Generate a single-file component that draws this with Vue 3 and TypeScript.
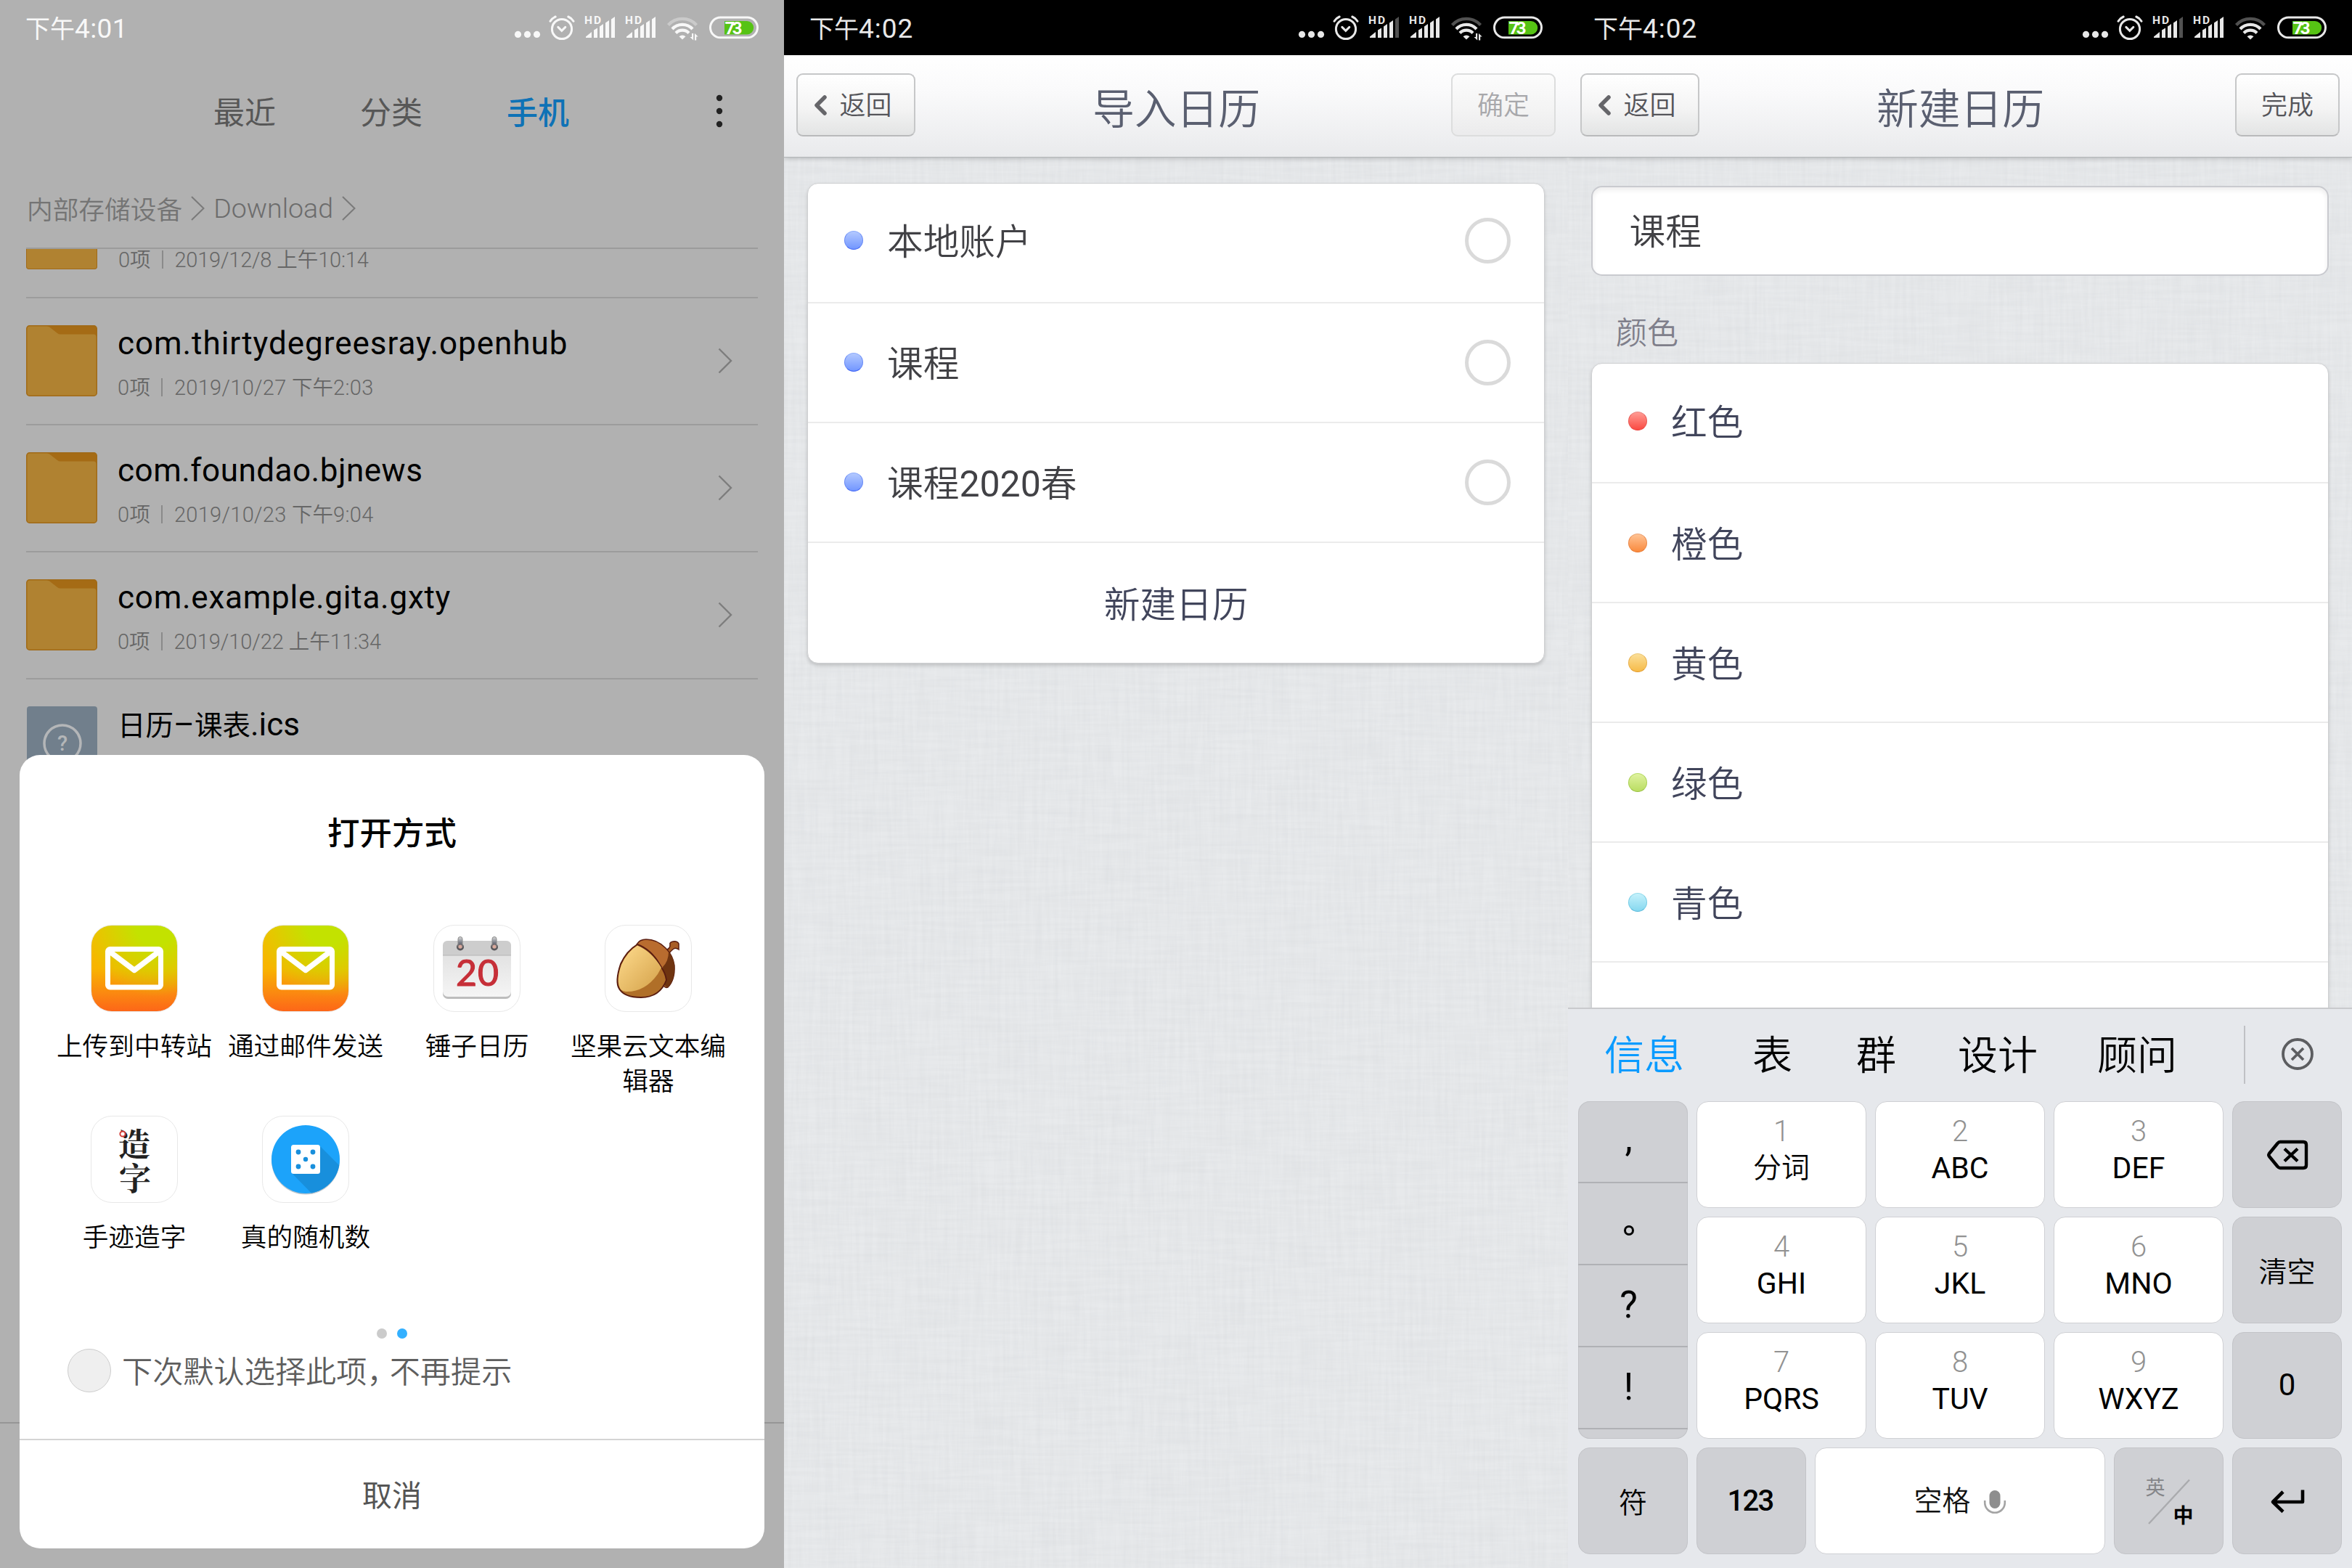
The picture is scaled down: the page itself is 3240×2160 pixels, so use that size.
<script setup lang="ts">
interface Screen {
  id: 'files' | 'import' | 'create'
  time: string
  weakSignal: boolean
  traffic: boolean
}

const screens: Screen[] = [
  { id: 'files', time: '4:01', weakSignal: false, traffic: true },
  { id: 'import', time: '4:02', weakSignal: true, traffic: true },
  { id: 'create', time: '4:02', weakSignal: true, traffic: false },
]

const tabs = ['最近', '分类', '手机']

const folders = [
  { name: 'com.thirtydegreesray.openhub', date: '2019/10/27', half: '下午', time: '2:03', track: 0.95, metaTrack: 0.3 },
  { name: 'com.foundao.bjnews', date: '2019/10/23', half: '下午', time: '9:04', track: 0.5, metaTrack: 0.3 },
  { name: 'com.example.gita.gxty', date: '2019/10/22', half: '上午', time: '11:34', track: 0.75, metaTrack: -0.05 },
]

const apps = [
  { icon: 'mail', label: '上传到中转站' },
  { icon: 'mail', label: '通过邮件发送' },
  { icon: 'calendar', label: '锤子日历' },
  { icon: 'nut', label: '坚果云文本编辑器' },
  { icon: 'zaozi', label: '手迹造字' },
  { icon: 'dice', label: '真的随机数' },
]

const calendars = [['本地账户'], ['课程'], ['课程', '2020', '春']]

const colors = [
  { name: '红色', cls: 'red' },
  { name: '橙色', cls: 'orange' },
  { name: '黄色', cls: 'yellow' },
  { name: '绿色', cls: 'green' },
  { name: '青色', cls: 'cyan' },
]

const keys = [
  ['1', '分词'], ['2', 'ABC'], ['3', 'DEF'],
  ['4', 'GHI'], ['5', 'JKL'], ['6', 'MNO'],
  ['7', 'PQRS'], ['8', 'TUV'], ['9', 'WXYZ'],
]
</script>

<template>
  <main class="board">
    <section v-for="s in screens" :key="s.id" class="screen" :class="s.id">
      <svg v-if="s.id !== 'files'" class="linen" width="1080" height="2160">
        <filter :id="s.id + 'Warp'" x="0" y="0" width="100%" height="100%" color-interpolation-filters="sRGB">
          <feTurbulence type="fractalNoise" baseFrequency="0.18 0.012" numOctaves="2" seed="3" />
          <feColorMatrix values="0 0 0 0 .45  0 0 0 0 .47  0 0 0 0 .5  .07 0 0 0 -.02" />
        </filter>
        <filter :id="s.id + 'Weft'" x="0" y="0" width="100%" height="100%" color-interpolation-filters="sRGB">
          <feTurbulence type="fractalNoise" baseFrequency="0.012 0.18" numOctaves="2" seed="8" />
          <feColorMatrix values="0 0 0 0 .45  0 0 0 0 .47  0 0 0 0 .5  .07 0 0 0 -.02" />
        </filter>
        <rect width="1080" height="2160" :filter="`url(#${s.id}Warp)`" />
        <rect width="1080" height="2160" :filter="`url(#${s.id}Weft)`" />
      </svg>

      <header class="status">
        <span class="clock"><span class="cjk">下午</span>{{ s.time }}</span>
        <svg class="status-icons" width="350" height="76" viewBox="700 0 350 76" fill="none" stroke-linecap="round">
          <g class="ink">
            <circle cx="713.5" cy="47.4" r="4.6" />
            <circle cx="726.5" cy="47.4" r="4.6" />
            <circle cx="739.5" cy="47.4" r="4.6" />
          </g>
          <g class="line" stroke-width="3">
            <circle cx="774" cy="40" r="13.6" />
            <path d="M768.8 37.4l5 4.9 5-4.9" />
            <path d="M758 29.2q2.5-4.2 7.2-6.2M790 29.2q-2.500-4.200-7.200-6.200" />
          </g>
          <g v-for="n in 2" :key="n" :transform="`translate(${(n - 1) * 56} 0)`" class="ink">
            <text x="805" y="32.800" font-size="15.500" font-weight="700" textLength="23">HD</text>
            <path d="M807 52v-1.500l8-6.500v8zM818 52V41.500l5-3V52zM826 52V36.500l5-3.500V52zM834 52V31.500l5-3.500V52z" />
            <path d="M842 52V26.500l5-3.500V52z" :opacity="n === 1 && s.weakSignal ? 0.35 : 1" />
          </g>
          <g class="line" stroke-width="4.200" stroke-linecap="butt">
            <path d="M920.500 34.500a26.500 26.500 0 0 1 39 0" opacity="0.35" />
            <path d="M926 40a19 19 0 0 1 28 0" />
            <path d="M931 45.500a12.500 12.500 0 0 1 18 0" />
          </g>
          <path class="ink" d="M935.500 50.200q4.500-3.600 9 0l-4.500 4.300z" />
          <path v-if="s.traffic" class="ink" d="M953 46h2.200v9.500l-4.700-4.500h2.500zM957 55.500v-9.500l4.700 4.500h-2.500v5z" />
          <rect class="line" x="978.500" y="24" width="65" height="27.800" rx="13.900" stroke-width="3" />
          <path fill="#56c314" d="M998 29h31a9.200 9.200 0 0 1 0 18.400h-31z" />
          <text class="pct" x="998.500" y="46.800" font-size="24" font-weight="700" textLength="24">73</text>
        </svg>
      </header>

      <template v-if="s.id === 'files'">
        <nav class="tabs">
          <span v-for="(t, i) in tabs" :key="t" class="tab" :class="{ on: i === 2 }">{{ t }}</span>
          <svg class="more" width="10" height="46" viewBox="0 0 10 46"><circle cx="5" cy="5" r="4.200" /><circle cx="5" cy="23" r="4.200" /><circle cx="5" cy="41" r="4.200" /></svg>
        </nav>
        <div class="crumbs">
          <span>内部存储设备</span>
          <svg width="20" height="34" viewBox="0 0 20 34"><path d="M1 1l16.500 16L1 33" /></svg>
          <span class="en">Download</span>
          <svg width="20" height="34" viewBox="0 0 20 34"><path d="M1 1l16.500 16L1 33" /></svg>
        </div>
        <div class="files-list">
          <div class="file clipped">
            <div class="folder-cut"></div>
            <div class="meta"><span>0<b>项</b></span><i></i><span>2019/12/8 <b>上午</b>10:14</span></div>
          </div>
          <div v-for="f in folders" :key="f.name" class="file">
            <svg class="thumb" width="98" height="98" viewBox="0 0 98 98">
              <rect x=".700" y=".700" width="96.600" height="96.600" rx="4" fill="#a56b15" stroke="#a06a18" stroke-width="1.400" />
              <path d="M1.500 5q0-3.500 3.500-3.500h24q3 0 5 2.500l9 7q2 1.500 4 1.500h46q3.500 0 3.500 3.500v77q0 3.500-3.500 3.500H5q-3.500 0-3.500-3.500z" fill="#b08231" />
            </svg>
            <div class="info">
              <div class="name" :style="{ letterSpacing: f.track + 'px' }">{{ f.name }}</div>
              <div class="meta" :style="{ letterSpacing: f.metaTrack + 'px' }"><span>0<b>项</b></span><i></i><span>{{ f.date }} <b>{{ f.half }}</b>{{ f.time }}</span></div>
            </div>
            <svg class="go" width="20" height="36" viewBox="0 0 20 36"><path d="M1.500 1.500L18 18 1.500 34.500" /></svg>
          </div>
          <div class="file last">
            <svg class="thumb" width="98" height="98" viewBox="0 0 98 98">
              <rect x="1" width="97" height="98" rx="4" fill="#717f8c" />
              <circle cx="50" cy="51" r="25" fill="none" stroke="#b4b6b8" stroke-width="3.500" />
              <text x="50" y="61" text-anchor="middle" font-size="29" font-weight="500" fill="#b4b6b8">?</text>
            </svg>
            <div class="info"><div class="name"><span class="zh">日历</span>–<span class="zh">课表</span>.ics</div></div>
          </div>
        </div>
        <div class="toolbar-line"></div>

        <div class="sheet">
          <h2>打开方式</h2>
          <div class="apps">
            <div v-for="a in apps" :key="a.label" class="app">
              <div class="app-icon" :class="a.icon">
                <svg v-if="a.icon === 'mail'" width="118" height="118" viewBox="0 0 118 118" fill="none" stroke="#fff" stroke-width="7" stroke-linejoin="round">
                  <rect x="22.500" y="32.500" width="73" height="52.500" rx="3" />
                  <path d="M24 35l35 26.500L94 35" stroke-width="7.500" />
                </svg>
                <svg v-else-if="a.icon === 'calendar'" width="118" height="118" viewBox="1 1 118 118">
                  <defs>
                    <linearGradient id="page" x1="0" y1="0" x2="0" y2="1"><stop offset="0" stop-color="#dcdcdc" /><stop offset="1" stop-color="#f5f5f5" /></linearGradient>
                    <linearGradient id="ring" x1="0" y1="0" x2="0" y2="1"><stop offset="0" stop-color="#ddd" /><stop offset=".500" stop-color="#777b85" /><stop offset="1" stop-color="#4c3c3c" /></linearGradient>
                  </defs>
                  <rect x="13" y="24" width="94" height="78" rx="7" fill="#bdbdbd" />
                  <rect x="13" y="22" width="94" height="77" rx="7" fill="url(#page)" />
                  <path d="M13 42V29q0-7 7-7h80q7 0 7 7v13z" fill="#cdcdcd" />
                  <path d="M13 42h94" stroke="#b4b4b4" stroke-width="1" />
                  <g v-for="x in [37, 84]" :key="x">
                    <circle :cx="x" cy="30.500" r="5" fill="#59565a" />
                    <rect :x="x - 3" y="16.500" width="6" height="16" rx="3" fill="url(#ring)" stroke="#8a8a8a" stroke-width="1" />
                    <circle :cx="x" cy="30" r="2.500" fill="#d9a99c" />
                  </g>
                  <text x="31" y="84" class="day" textLength="59">20</text>
                </svg>
                <svg v-else-if="a.icon === 'nut'" width="118" height="118" viewBox="1 1 118 118">
                  <defs><linearGradient id="nutBody" x1="0" y1="0" x2="1" y2="1"><stop offset="0" stop-color="#ffdc8e" /><stop offset="1" stop-color="#d3a048" /></linearGradient></defs>
                  <path d="M82 36Q91 33 90 27q-1-3 4-4 6-1 8 3v8q-4-3-7-1-3 2-7 7z" fill="#a95e26" stroke="#5a1d10" stroke-width="1.500" />
                  <path d="M44 27Q48 20 57 20 72 20 84 32q10 10 12 24 1 20-9 30-5 2-8-6z" fill="#b96c2f" stroke="#5a1d10" stroke-width="1.500" />
                  <path d="M88 37q7 8 8 19 1 20-9 30-3 0-5-4L80 58q8-8 8-21z" fill="#6f3410" />
                  <path d="M45 27Q30 36 22 54q-8 24-2 34 7 12 30 12 26 0 35-24Q84 67 76 55 64 34 45 27z" fill="#b06f28" stroke="#5a1d10" stroke-width="2" />
                  <path d="M45 28.500Q31 37 23 55q-8 23-1 34 3 3 7 3 26 1 44-24l5-9Q65 37 45 28.500z" fill="url(#nutBody)" />
                </svg>
                <div v-else-if="a.icon === 'zaozi'" class="brush">
                  <svg width="118" height="118" viewBox="1 1 118 118">
                    <text x="38" y="56">造</text>
                    <text x="39" y="103">字</text>
                    <circle cx="44" cy="25" r="3.600" fill="#fff" stroke="#d23b36" stroke-width="2" />
                  </svg>
                </div>
                <svg v-else width="118" height="118" viewBox="1 1 118 118">
                  <defs><clipPath id="disc"><circle cx="60" cy="60" r="47" /></clipPath></defs>
                  <circle cx="60" cy="61.500" r="47" fill="#bcc5cc" />
                  <circle cx="60" cy="60" r="47" fill="#1ca3fa" />
                  <path clip-path="url(#disc)" d="M79 41l40 40v40H82L41 79z" fill="#188fdc" />
                  <rect x="40" y="40" width="40" height="40" rx="3.500" fill="#fff" />
                  <g fill="#188fdc"><circle cx="50" cy="50" r="3.400" /><circle cx="70" cy="50" r="3.400" /><circle cx="60" cy="60" r="3.200" /><circle cx="50" cy="70" r="3.400" /><circle cx="70" cy="70" r="3.400" /></g>
                </svg>
              </div>
              <div class="app-label">{{ a.label }}</div>
            </div>
          </div>
          <div class="pager"><i></i><i class="on"></i></div>
          <div class="remember"><i></i><span>下次默认选择此项<em>，</em>不再提示</span></div>
          <div class="cancel">取消</div>
        </div>
      </template>

      <template v-else>
        <div class="title-bar">
          <div class="btn back">
            <svg width="18" height="28" viewBox="0 0 18 28"><path d="M15 3L4 14l11 11" /></svg>
            <span>返回</span>
          </div>
          <h1>{{ s.id === 'import' ? '导入日历' : '新建日历' }}</h1>
          <div class="btn done" :class="{ off: s.id === 'import' }"><span>{{ s.id === 'import' ? '确定' : '完成' }}</span></div>
        </div>

        <div v-if="s.id === 'import'" class="content">
          <div class="card">
            <div v-for="(c, i) in calendars" :key="i" class="row">
              <i class="dot blue"></i>
              <span class="row-name"><span v-for="(p, j) in c" :key="j" :class="{ num: j === 1 }">{{ p }}</span></span>
              <i class="radio"></i>
            </div>
            <div class="row add">新建日历</div>
          </div>
        </div>

        <template v-else>
          <div class="content short">
            <div class="field">课程</div>
            <div class="caption">颜色</div>
            <div class="card palette">
              <div v-for="c in colors" :key="c.name" class="row">
                <i class="dot" :class="c.cls"></i>
                <span class="row-name">{{ c.name }}</span>
              </div>
              <div class="row"></div>
            </div>
          </div>
          <div class="keyboard">
            <div class="candidates">
              <span class="on">信息</span><span>表</span><span>群</span><span>设计</span><span>顾问</span>
              <i></i>
              <svg width="46" height="46" viewBox="0 0 46 46" fill="none" stroke="#5c5d60" stroke-width="3.800"><circle cx="23" cy="23" r="20" /><path d="M15 15l16 16M31 15L15 31" /></svg>
            </div>
            <div class="pad">
              <div class="punct">
                <div class="mark comma">,</div>
                <div class="mark"><i class="stop"></i></div>
                <div class="mark">?</div>
                <div class="mark">!</div>
                <div class="mark"></div>
              </div>
              <div class="nine">
                <div v-for="k in keys" :key="k[0]" class="key">
                  <small>{{ k[0] }}</small>
                  <span :class="{ zh: k[0] === '1' }">{{ k[1] }}</span>
                </div>
              </div>
              <div class="side">
                <div class="key gray">
                  <svg width="58" height="44" viewBox="0 0 58 44" fill="none" stroke="#000" stroke-width="4.400" stroke-linejoin="round"><path d="M19 4h32q4 0 4 4v28q0 4-4 4H19q-2 0-3.500-2L4 24q-1.500-2 0-4L15.500 6Q17 4 19 4zM25 13.500l18 17M43 13.500l-18 17" /></svg>
                </div>
                <div class="key gray zh">清空</div>
                <div class="key gray zero">0</div>
              </div>
            </div>
            <div class="bottom">
              <div class="key gray zh w1 sym">符</div>
              <div class="key gray w1 num3">123</div>
              <div class="key space">
                <span>空格</span>
                <svg width="32" height="34" viewBox="0 0 32 34"><rect x="8.500" y="1" width="15" height="25" rx="7.500" fill="#8e8e8e" /><path d="M2.200 15v3a13.800 13.800 0 0 0 27.600 0v-3" fill="none" stroke="#a4a4a4" stroke-width="2.600" /></svg>
              </div>
              <div class="key gray w1">
                <svg width="100" height="110" viewBox="-12 -17 100 110">
                  <path d="M66 8.500L10 69" stroke="#aaabae" stroke-width="2.400" />
                  <text x="5.500" y="28.500" font-size="27" fill="#858689">英</text>
                  <text x="43.500" y="67.500" font-size="28" font-weight="700" fill="#000">中</text>
                </svg>
              </div>
              <div class="key gray w1">
                <svg width="50" height="34" viewBox="0 0 50 34" fill="none" stroke="#000" stroke-width="4.600"><path d="M46 1.500V18H5M19 4L5 18l14 13.500" stroke-linejoin="round" /></svg>
              </div>
            </div>
          </div>
        </template>
      </template>
    </section>
  </main>
</template>

<style>
body { margin: 0; background: #e5e7ea; }
</style>

<style scoped>
.board {
  display: flex;
  width: 3240px;
  height: 2160px;
  overflow: hidden;
  font-family: Roboto, "Noto Sans CJK SC", sans-serif;
  white-space: nowrap;
}
.screen {
  position: relative;
  isolation: isolate;
  display: flex;
  flex-direction: column;
  width: 1080px;
  height: 2160px;
  overflow: hidden;
  background: #e8eaec;
}
.screen.files { background: #b1b1b1; }
.linen { position: absolute; inset: 0; z-index: -1; }
i { font-style: normal; display: block; }
em { font-style: normal; }
b { font-weight: inherit; }

/* status bar */
.status {
  display: flex;
  flex: none;
  justify-content: space-between;
  height: 76px;
  padding: 0 30px 0 35px;
  background: #000;
  color: #e8e8e8;
}
.files .status { background: none; color: #f8f8f8; }
.clock { font-size: 37px; line-height: 80px; letter-spacing: 1px; }
.files .clock { letter-spacing: .4px; }
.clock .cjk { font-size: 34px; letter-spacing: 0; }
.ink { fill: currentColor; }
.line { stroke: currentColor; }
.pct { fill: #fff; }

/* file manager */
.tabs { display: flex; height: 156px; padding-left: 294px; line-height: 160px; }
.tab { width: 202px; font-size: 43px; color: #575757; }
.tab.on { color: #0e72b6; font-weight: 500; }
.more { margin: 54px 0 0 86px; fill: #222; }
.crumbs {
  display: flex;
  align-items: center;
  height: 109px;
  padding-left: 37px;
  font-size: 35.700px;
  font-weight: 350;
  color: #747474;
}
.crumbs svg { margin: 0 11.500px; fill: none; stroke: #7a7a7a; stroke-width: 2; }
.crumbs .en { font-size: 37.500px; font-weight: 300; color: #6c6c6c; }
.files-list { margin: 0 36px; border-top: 2px solid #9b9b9b; height: 1616px; overflow: hidden; }
.file { display: flex; height: 173px; border-bottom: 2px solid #9c9c9c; }
.file.clipped { height: 65.500px; }
.file.last { border: 0; }
.folder-cut { width: 96px; height: 27px; border: 1px solid #a06a18; border-top: 0; border-radius: 0 0 4px 4px; background: #b08231; }
.thumb { flex: none; margin-top: 37px; }
.info { margin-left: 28px; flex: 1; }
.name { margin-top: 36px; height: 52px; line-height: 52px; font-size: 44px; color: #000; }
.name .zh { font-size: 38.500px; }
.meta { display: flex; height: 48px; line-height: 48px; margin-top: 11px; font-size: 29px; font-weight: 300; color: #666; }
.meta b { font-size: 28.500px; font-weight: 350; letter-spacing: 0; }
.meta i { width: 2px; height: 25px; margin: 11px 15.500px 0; background: #8a8a8a; }
.clipped .meta { margin: -9px 0 0 29px; letter-spacing: -.2px; }
.go { margin: 68px 35px 0 0; fill: none; stroke: #7d7d7d; stroke-width: 2.400; }
.toolbar-line { height: 2px; background: #969696; }

/* open-with sheet */
.sheet {
  position: absolute;
  left: 27px;
  top: 1040px;
  width: 1026px;
  height: 1093px;
  border-radius: 28px;
  background: #fff;
}
.sheet h2 { margin: 78px 0 96px; height: 60px; line-height: 62px; text-align: center; font-size: 44.500px; font-weight: 500; }
.apps { display: flex; flex-wrap: wrap; width: 944px; height: 526px; margin-left: 40px; align-content: flex-start; }
.app { width: 236px; height: 263px; display: flex; flex-direction: column; align-items: center; }
.app-icon {
  box-sizing: border-box;
  width: 120px;
  height: 120px;
  border: 1px solid #e8e8e8;
  border-radius: 29px;
  overflow: hidden;
}
.app-icon svg { display: block; }
.mail {
  background: radial-gradient(circle at 75% 0%, #c3e200 0 18%, rgba(195,226,0,0) 66%), linear-gradient(180deg, #f3be00 0%, #f8b400 50%, #fb8a10 78%, #fd6618 100%);
}
.day { font-family: Lato, sans-serif; font-size: 50px; font-weight: 400; fill: #c62f38; stroke: #c62f38; stroke-width: 1.200px; }
.brush { font-size: 44px; font-weight: 700; fill: #222; font-family: "Noto Serif CJK SC", "Noto Sans CJK SC", serif; }
.app-label { width: 222px; margin-top: 24px; white-space: normal; word-break: break-all; text-align: center; font-size: 35.700px; font-weight: 350; line-height: 48px; color: #000; }
.pager { display: flex; justify-content: center; gap: 14px; margin-top: 30px; }
.pager i { width: 14px; height: 14px; border-radius: 50%; background: #cbcbcb; }
.pager i.on { background: #33b0ff; }
.remember { display: flex; align-items: center; height: 60px; margin: 14px 0 0 66px; font-size: 42.200px; font-weight: 350; color: #5e5e5e; }
.remember i { box-sizing: border-box; width: 60px; height: 60px; border: 1.500px solid #cdcdcd; border-radius: 50%; background: #efefef; margin-right: 15px; }
.remember span { margin-top: -3px; }
.remember em { letter-spacing: -11px; }
.cancel { margin-top: 64px; border-top: 2px solid #d4d4d4; line-height: 154px; text-align: center; font-size: 41px; color: #555; }

/* calendar app */
.title-bar {
  position: relative;
  flex: none;
  display: flex;
  justify-content: space-between;
  height: 140px;
  padding: 0 17px;
  border-bottom: 1.500px solid #b3b6b8;
  background: linear-gradient(#fff, #fafafb 35%, #e9eaec);
  box-shadow: 0 2px 6px rgba(0,0,0,.18);
}
.title-bar h1 { margin: 0; line-height: 150px; font-size: 57.800px; font-weight: 350; color: #5a5f70; position: relative; left: -9.500px; }
.btn {
  box-sizing: border-box;
  display: flex;
  align-items: center;
  justify-content: center;
  height: 87px;
  margin-top: 25px;
  border: 2px solid #c6c7c8;
  border-bottom-color: #b9babb;
  border-radius: 9px;
  background: linear-gradient(#fff, #f4f4f4 55%, #e3e4e4);
  font-size: 36px;
  font-weight: 350;
  color: #55555a;
  line-height: 87px;
}
.btn span { padding-top: 3px; }
.back { width: 164px; gap: 17px; padding-right: 8px; }
.back svg { margin-top: 1px; fill: none; stroke: #66666a; stroke-width: 5.500; stroke-linecap: round; stroke-linejoin: round; }
.done { width: 144px; }
.done.off { border-color: #dcdddd; color: #a8a8ab; background: linear-gradient(#fcfcfc, #f4f4f4 55%, #ebebec); }
.content { flex: 1; padding: 34.500px 32px 0; overflow: hidden; }
.content.short { flex: none; height: 1136px; }
.card {
  border: 1.500px solid #cfd0d2;
  border-radius: 15px;
  background: #fff;
  box-shadow: 0 3px 5px rgba(0,0,0,.16);
}
.row {
  box-sizing: border-box;
  display: flex;
  align-items: center;
  height: 165px;
  padding: 0 46px 0 50px;
  border-bottom: 2px solid #ebebeb;
  font-size: 49.700px;
  font-weight: 350;
  color: #414145;
}
.row:first-child { padding-bottom: 6px; }
.row:last-child { border-bottom: 0; }
.row-name { margin-left: 33px; flex: 1; line-height: 60px; padding-top: 5px; }
.num { font-size: 50px; font-weight: 400; }
.add, .palette .row { color: #41455b; }
.palette .row-name { padding-top: 6px; }
.row.add { justify-content: center; padding: 0 48px 2px; }
.radio { box-sizing: border-box; width: 63px; height: 63px; border: 5.500px solid #dadada; border-radius: 50%; }
.dot { box-sizing: border-box; width: 26px; height: 26px; border-radius: 50%; border: 1.500px solid; }
.blue { background: linear-gradient(#b3c9ff, #7296ff); border-color: #8cabfb #6688f6 #3d63f6; }
.red { background: linear-gradient(#ff9c94, #fa4a42); border-color: #ea8480 #e85550 #ec3c38; }
.orange { background: linear-gradient(#ffc394, #f98a3e); border-color: #eba476 #ea8645 #e97428; }
.yellow { background: linear-gradient(#fbdf98, #f6bb48); border-color: #ecc878 #e8ae48 #e39a28; }
.green { background: linear-gradient(#dff2a0, #badd62); border-color: #b7dd68 #a9d050 #98c040; }
.cyan { background: linear-gradient(#c5f1fb, #86d8ef); border-color: #94dcec #74cce6 #55b8da; }
.field {
  box-sizing: border-box;
  height: 124px;
  margin-top: 4px;
  padding-left: 50.500px;
  line-height: 124px;
  border: 2px solid #c9cacf;
  border-radius: 15px;
  background: #fff;
  box-shadow: inset 0 4px 6px rgba(0,0,0,.07);
  font-size: 49.700px;
  font-weight: 350;
  color: #414145;
}
.caption { height: 120.500px; line-height: 159px; padding-left: 34px; font-size: 43px; font-weight: 350; color: #7f7f8b; }

/* keyboard */
.keyboard { flex: 1; border-top: 2px solid #c9cacd; background: #e6e8ec; padding: 0 14px; }
.candidates { display: flex; align-items: center; height: 127.500px; padding-left: 36px; font-size: 55px; font-weight: 350; color: #000; }
.candidates span { padding-bottom: 8px; }
.candidates .on { color: #0a9bff; }
.candidates span:nth-child(2) { margin-left: 94px; }
.candidates span:nth-child(3) { margin-left: 88px; }
.candidates span:nth-child(4) { margin-left: 85px; }
.candidates span:nth-child(5) { margin-left: 82px; }
.candidates i { width: 1.500px; height: 80px; margin: 0 49px 0 92px; background: #c0c1c5; }
.candidates svg { margin-top: -3px; }
.pad { display: flex; gap: 12px; height: 465px; }
.punct { width: 151px; border-radius: 16px; background: #cfd0d4; overflow: hidden; box-shadow: inset 0 0 0 1px #c3c4c8; }
.mark { box-sizing: border-box; height: 113px; border-bottom: 2px solid #b0b1b5; display: flex; align-items: center; justify-content: center; padding: 0 12px 3px 0; font-size: 52px; font-weight: 400; }
.mark:last-child { border: 0; }
.comma { padding-bottom: 8px; font-weight: 400; }
.stop { width: 8px; height: 8px; border: 3px solid #000; border-radius: 50%; margin-top: 22px; }
.nine { display: grid; grid-template-columns: repeat(3, 234px); gap: 12px; }
.side { display: flex; flex-direction: column; gap: 12px; }
.key {
  box-sizing: border-box;
  display: flex;
  flex-direction: column;
  align-items: center;
  justify-content: center;
  height: 147px;
  border: 1px solid #cfd0d4;
  border-radius: 16px;
  background: #fff;
  font-size: 41px;
  color: #000;
}
.key small { font-size: 40px; line-height: 50px; font-weight: 300; color: #929292; margin-top: -14px; }
.key span { line-height: 50px; }
.key .zh, .key.zh { font-size: 39px; font-weight: 350; }
.key.zh { padding-bottom: 2px; }
.gray { background: #cfd0d4; border-color: #c3c4c8; }
.side .key, .w1 { width: 151px; }
.zero { font-size: 42px; padding-bottom: 2px; }
.num3 { font-weight: 500; letter-spacing: -1.800px; font-size: 40px; padding-right: 3px; }
.bottom { display: flex; gap: 12px; margin-top: 12px; }
.space { width: 400px; flex-direction: row; gap: 17px; font-size: 39px; font-weight: 350; color: #111; }
.space svg { margin-top: 2px; }
</style>
